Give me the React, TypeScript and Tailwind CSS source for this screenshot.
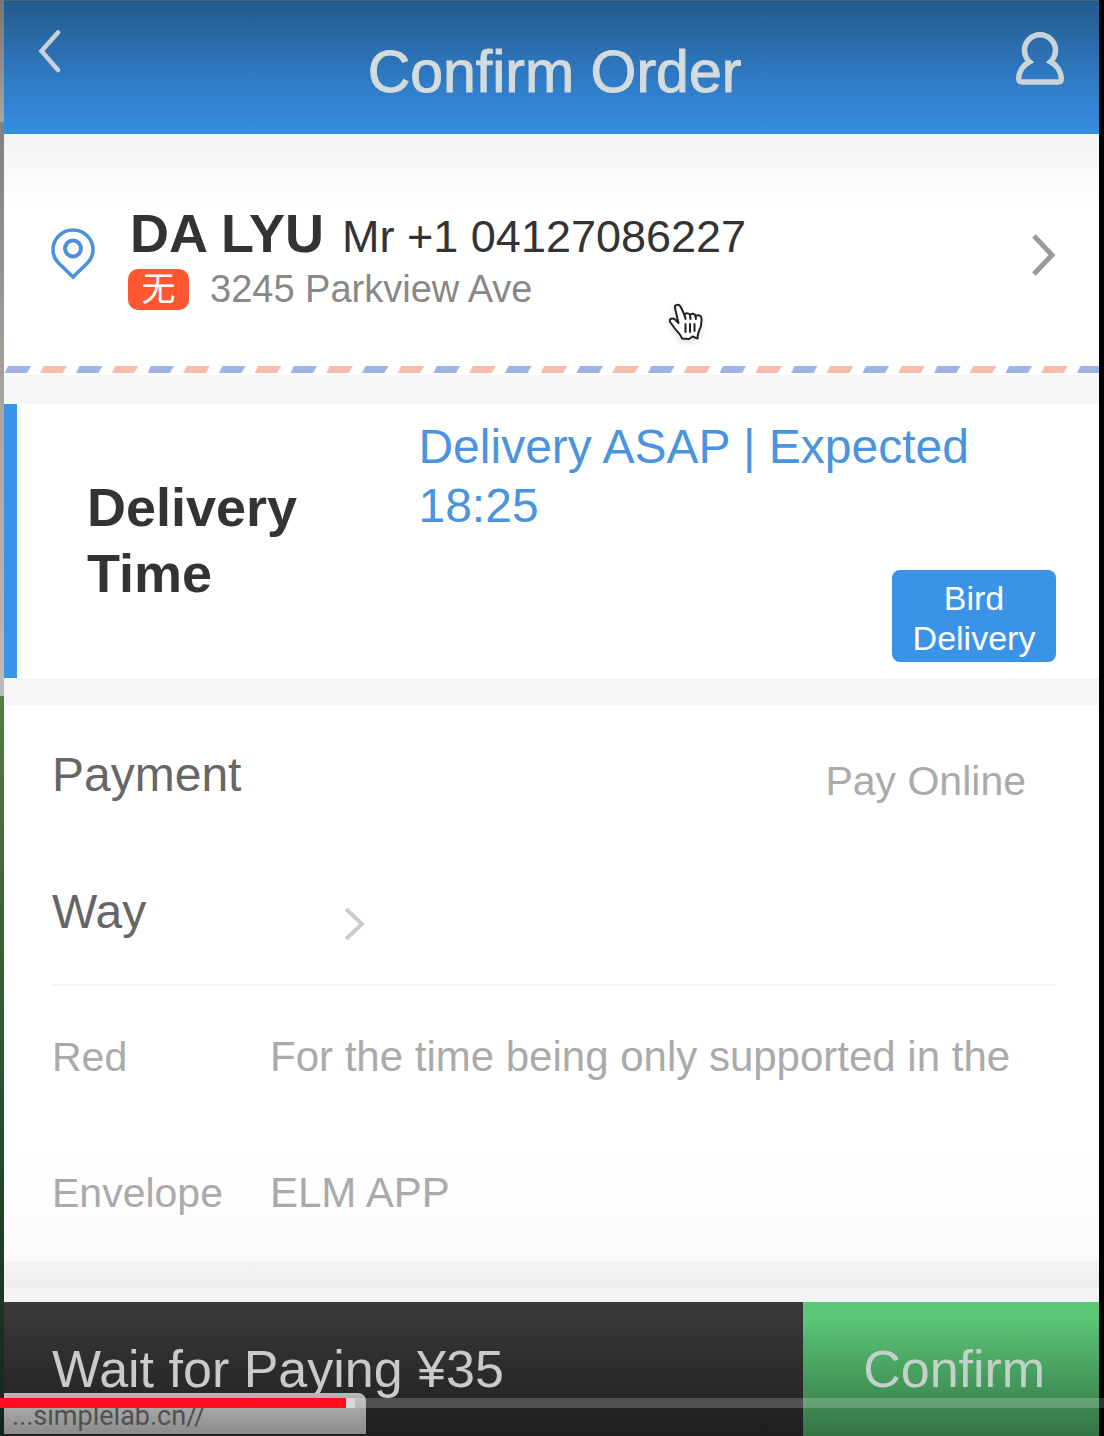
import React from "react";

function BackIcon() {
  return (
    <svg width="24" height="44" viewBox="0 0 24 44" fill="none" stroke="#c9d2d4" strokeWidth="4.5" strokeLinecap="round" aria-hidden="true">
      <path d="M20 3.500 L3.500 22 L20 41" />
    </svg>
  );
}

function UserIcon() {
  return (
    <svg width="50" height="56" viewBox="0 0 50 56" fill="none" stroke="#cbd5d8" strokeWidth="5.5" aria-hidden="true">
      <path d="M14.500 31.700 A15.500 15.500 0 1 1 35.500 31.700 C42 35 46.300 42 46.300 48.500 Q46.300 52 43 52 H7 Q3.700 52 3.700 48.500 C3.700 42 8 35 14.500 31.700 Z" />
    </svg>
  );
}

function PinIcon() {
  return (
    <svg width="46" height="54" viewBox="0 0 46 54" fill="none" stroke="#4a90da" aria-hidden="true">
      <path strokeWidth="3.5" d="M23 49 L9 35.500 C5 31.500 3 27 3 22 A20 20 0 0 1 43 22 C43 27 41 31.500 37 35.500 Z" />
      <circle cx="23" cy="20.500" r="8" strokeWidth="4" />
    </svg>
  );
}

function HandCursor() {
  return (
    <svg width="38" height="40" viewBox="0 0 38 40" fill="#fff" stroke="#222" strokeWidth="2" strokeLinejoin="round" strokeLinecap="round" className="drop-shadow-md" aria-hidden="true">
      <path d="M7 5 C6 1.500 11 .8 12.500 3.500 L16.500 12 C17 9.500 21 9.500 22 12 C23.500 10 27 10.500 27.500 13 C30 11.500 33.500 12.500 33.500 15.500 C34 21 33 24 31 28 C30.300 30 29.500 31.500 29.500 35.500 L24.500 33.500 L21 36 L14 35.500 C13 31.500 9 28.500 6.500 25 L2.500 19.500 C0 15.500 5 14.500 7 16.500 L10.500 20 Z" />
      <path d="M16.500 12 L17.500 16 M22 12 L22.500 16 M27.500 13 L28 16 M17.500 21 V29 M22 21 V29 M26.500 21 V28" fill="none" />
    </svg>
  );
}

function AirmailStripe() {
  return (
    <svg className="block h-[9px] w-full" aria-hidden="true">
      <defs>
        <pattern id="airmail" width="71.5" height="9" patternUnits="userSpaceOnUse">
          <path d="M4 0 H27 L23 7 H0.500 Z" fill="#9fb3e3" />
          <path d="M39.750 0 H62.750 L58.750 7 H36.250 Z" fill="#f6bbaa" />
        </pattern>
      </defs>
      <rect width="100%" height="9" fill="url(#airmail)" />
    </svg>
  );
}

function Header() {
  return (
    <header className="flex h-[134px] items-start border-t border-[#49657f] bg-linear-to-b from-[#235a8c] via-[#2e76bd] to-[#368ee2] px-[34px]">
      <button type="button" aria-label="Back" className="mt-7 w-14">
        <BackIcon />
      </button>
      <h1 className="mt-9 flex-1 text-center text-[59px] leading-[70px] text-[#d4dbdd] [-webkit-text-stroke:1px_#d4dbdd]">
        Confirm Order
      </h1>
      <button type="button" aria-label="Account" className="mt-[29px]">
        <UserIcon />
      </button>
    </header>
  );
}

function AddressCard() {
  return (
    <section className="relative bg-linear-to-b from-[#f3f3f3] to-white to-30%">
      <button type="button" className="flex w-full items-center pt-[69px] pr-[43px] pb-[51px] pl-[46px] text-left">
        <span className="mb-2 w-[78px]">
          <PinIcon />
        </span>
        <span className="flex-1">
          <span className="flex h-[60px] items-baseline gap-[18px] pl-[2px] leading-[60px] text-[#333]">
            <b className="text-[54px]">DA LYU</b>
            <span className="text-[45px]">Mr +1 04127086227</span>
          </span>
          <span className="flex h-[52px] items-center gap-[21px] text-[38px] leading-[52px] text-[#888]">
            <span className="flex h-[41px] w-[61px] items-center justify-center rounded-[10px] bg-[#fe5732] text-[34px] text-white">
              无
            </span>
            3245 Parkview Ave
          </span>
        </span>
        <svg className="mb-2" width="24" height="44" viewBox="0 0 24 44" fill="none" stroke="#999" strokeWidth="5" aria-hidden="true">
          <path d="M2 3 L20 22 L2 41" />
        </svg>
      </button>
      <AirmailStripe />
      <span className="pointer-events-none absolute top-[169px] left-[664px]">
        <HandCursor />
      </span>
    </section>
  );
}

function DeliveryTime() {
  return (
    <section className="mt-[29px] flex items-center border-l-[13px] border-[#3a93e6] bg-white pt-[13px] pr-[43px] pb-4 pl-[70px]">
      <h2 className="w-[34%] text-[54px] leading-[66px] font-bold text-[#333]">Delivery Time</h2>
      <div className="flex flex-1 flex-col gap-[35px]">
        <p className="pl-[2px] text-[48px] leading-[59px] text-[#4a94df]">Delivery ASAP | Expected 18:25</p>
        <span className="w-[164px] self-end rounded-lg bg-[#3a93e6] px-4 pt-2 pb-1 text-center text-[34px] leading-10 text-white">
          Bird Delivery
        </span>
      </div>
    </section>
  );
}

function Payment() {
  return (
    <section className="mt-[27px] bg-linear-to-b from-white from-80% to-[#fbfbfb] pr-[43px] pl-12">
      <button type="button" className="flex w-full items-start border-b-2 border-[#f5f5f5] pt-px pb-1 text-left">
        <span className="w-[29%] text-[48px] leading-[137px] text-[#666]">Payment Way</span>
        <span className="flex flex-1 flex-col pt-[7px]">
          <span className="pr-[30px] text-right text-[41px] leading-[137px] text-[#aaa]">Pay Online</span>
          <svg className="mt-[57px] ml-px" width="22" height="34" viewBox="0 0 22 34" fill="none" stroke="#ccc" strokeWidth="4" aria-hidden="true">
            <path d="M2 2 L18 17 L2 32" />
          </svg>
        </span>
      </button>
      <dl className="flex pt-[3px] leading-[136px] text-[#aaa]">
        <dt className="w-[218px] text-[41px]">Red Envelope</dt>
        <dd className="flex-1 text-[42px]">For the time being only supported in the ELM APP</dd>
      </dl>
    </section>
  );
}

function CheckoutBar() {
  return (
    <footer className="flex h-[134px] items-stretch text-[52px]">
      <p className="flex flex-1 items-center bg-linear-to-b from-[#3a3a3a] to-[#1f1f1f] pl-12 text-[#cacaca]">
        Wait for Paying ¥35
      </p>
      <button type="button" className="w-[27%] bg-linear-to-b from-[#5bc878] from-10% to-[#347445] pl-[6px] text-[#c3d2c8]">
        Confirm
      </button>
    </footer>
  );
}

export default function App() {
  return (
    <div className="relative flex min-h-screen bg-black font-['Liberation_Sans','Noto_Sans_CJK_SC',sans-serif]">
      <div className="flex w-1 flex-col">
        <div className="basis-[8.5%] bg-linear-to-b from-[#777] to-[#a5a5a5]" />
        <div className="basis-[40%] bg-linear-to-b from-[#808080] via-[#aaa59d] to-[#bdbbb8]" />
        <div className="flex-1 bg-linear-to-b from-[#4e8040] via-[#2c5530] to-[#12251a]" />
      </div>
      <main className="mr-[5px] min-w-0 flex-1 bg-[#f6f6f6]">
        <Header />
        <AddressCard />
        <DeliveryTime />
        <Payment />
        <div className="h-[27px] bg-linear-to-b from-[#f3f3f3] to-[#ededed]" />
        <div className="h-[14px] bg-[#f3f3f3]" />
        <CheckoutBar />
      </main>
      <div className="absolute bottom-[2px] left-1 h-[41px] w-[362px] rounded-tr-lg bg-linear-to-b from-[#b8b8b8] to-[#8b8b8b] pt-2 pl-2 font-['Roboto',sans-serif] text-[27px] leading-[30px] text-[#505050]">
        ...simplelab.cn//
      </div>
      <div
        role="progressbar"
        aria-label="Playback position"
        aria-valuenow={31}
        className="absolute inset-x-0 bottom-7 flex h-[10px] bg-white/20"
      >
        <div className="w-[346px] bg-[#ff0d1a]" />
        <div className="w-[9px] bg-[#d8d8d8]" />
      </div>
    </div>
  );
}
